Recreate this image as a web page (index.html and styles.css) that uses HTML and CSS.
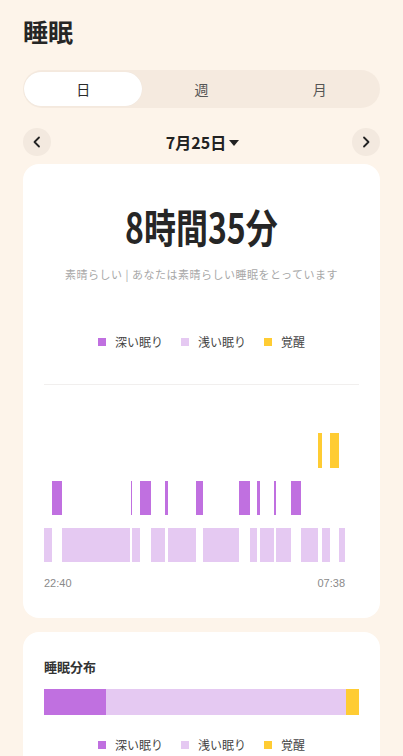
FILE: index.html
```html
<!DOCTYPE html>
<html lang="ja">
<head>
<meta charset="utf-8">
<title>睡眠</title>
<link rel="stylesheet" href="styles.css">
</head>
<body>
<div class="page">
  <h1 class="title">睡眠</h1>
  <div class="segment">
    <div class="seg-item active">日</div>
    <div class="seg-item">週</div>
    <div class="seg-item">月</div>
  </div>
  <div class="date-row">
    <button class="nav-btn" aria-label="前へ">
      <svg width="10" height="12" viewBox="0 0 10 12"><path d="M7 1.5 L2.5 6 L7 10.5" fill="none" stroke="#222" stroke-width="1.8" stroke-linecap="round" stroke-linejoin="round"/></svg>
    </button>
    <div class="date">7月25日<span class="caret"></span></div>
    <button class="nav-btn" aria-label="次へ">
      <svg width="10" height="12" viewBox="0 0 10 12"><path d="M3 1.5 L7.5 6 L3 10.5" fill="none" stroke="#222" stroke-width="1.8" stroke-linecap="round" stroke-linejoin="round"/></svg>
    </button>
  </div>

  <section class="card card-main">
    <div class="total"><span class="total-text">8時間35分</span></div>
    <p class="subtitle">素晴らしい | あなたは素晴らしい睡眠をとっています</p>
    <div class="legend">
      <span class="lg-item"><i class="sq deep"></i>深い眠り</span>
      <span class="lg-item"><i class="sq light"></i>浅い眠り</span>
      <span class="lg-item"><i class="sq awake"></i>覚醒</span>
    </div>
    <div class="divider"></div>
    <div class="chart">
      <div class="bar awake" style="left:274px;width:4px"></div>
      <div class="bar awake" style="left:286px;width:9px"></div>

      <div class="bar deep" style="left:8px;width:10px"></div>
      <div class="bar deep" style="left:86.8px;width:1.6px"></div>
      <div class="bar deep" style="left:96.3px;width:10.7px"></div>
      <div class="bar deep" style="left:121.3px;width:2.4px"></div>
      <div class="bar deep" style="left:152px;width:7px"></div>
      <div class="bar deep" style="left:195px;width:11px"></div>
      <div class="bar deep" style="left:213px;width:3px"></div>
      <div class="bar deep" style="left:230px;width:2px"></div>
      <div class="bar deep" style="left:247px;width:10px"></div>

      <div class="bar light" style="left:0;width:8px"></div>
      <div class="bar light" style="left:18.3px;width:68px"></div>
      <div class="bar light" style="left:88.4px;width:7.6px"></div>
      <div class="bar light" style="left:107.3px;width:13.7px"></div>
      <div class="bar light" style="left:124px;width:28px"></div>
      <div class="bar light" style="left:159.3px;width:35.7px"></div>
      <div class="bar light" style="left:206.3px;width:6.7px"></div>
      <div class="bar light" style="left:216.3px;width:13.7px"></div>
      <div class="bar light" style="left:232.3px;width:14.7px"></div>
      <div class="bar light" style="left:257.3px;width:16.7px"></div>
      <div class="bar light" style="left:278px;width:8px"></div>
      <div class="bar light" style="left:295px;width:6px"></div>
    </div>
    <div class="times">
      <span>22:40</span>
      <span>07:38</span>
    </div>
  </section>

  <section class="card card-dist">
    <h2 class="dist-title">睡眠分布</h2>
    <div class="dist-bar">
      <div class="seg deep" style="width:62px"></div>
      <div class="seg light" style="flex:1"></div>
      <div class="seg awake" style="width:13px"></div>
    </div>
    <div class="legend legend-dist">
      <span class="lg-item"><i class="sq deep"></i>深い眠り</span>
      <span class="lg-item"><i class="sq light"></i>浅い眠り</span>
      <span class="lg-item"><i class="sq awake"></i>覚醒</span>
    </div>
  </section>
</div>
</body>
</html>
```

FILE: styles.css
```css
* { box-sizing: border-box; }
html, body { margin: 0; padding: 0; }
body {
  background: #fdf4ea;
  font-family: "Noto Sans CJK JP", "Noto Sans", sans-serif;
  color: #222;
  overflow: hidden;
}
.page {
  padding: 0 23px;
}
.title {
  margin: 0;
  padding-top: 14px;
  font-size: 25px;
  line-height: 34px;
  font-weight: 700;
  color: #262626;
}
.segment {
  margin-top: 22px;
  height: 38px;
  background: #f5eadf;
  border-radius: 19px;
  display: flex;
  padding: 2px 1px;
}
.seg-item {
  flex: 1;
  display: flex;
  align-items: center;
  justify-content: center;
  font-size: 14px;
  color: #555;
  border-radius: 17px;
}
.seg-item.active {
  background: #fff;
  color: #2a2a2a;
  box-shadow: 0 0 1px rgba(0,0,0,0.06);
}
.date-row {
  margin-top: 20px;
  height: 28px;
  display: flex;
  align-items: center;
  justify-content: space-between;
}
.nav-btn {
  width: 28px;
  height: 28px;
  border-radius: 50%;
  border: none;
  padding: 0;
  background: #f3e9df;
  display: flex;
  align-items: center;
  justify-content: center;
}
.date {
  font-size: 16px;
  font-weight: 700;
  color: #222;
  display: flex;
  align-items: center;
  margin-left: 2px;
}
.caret {
  display: inline-block;
  width: 0;
  height: 0;
  border-left: 5px solid transparent;
  border-right: 5px solid transparent;
  border-top: 6px solid #222;
  margin-left: 3px;
  margin-top: 1px;
}
.card {
  background: #fff;
  border-radius: 16px;
  padding: 0 21px;
}
.card-main {
  margin-top: 8px;
  padding-bottom: 28px;
}
.total {
  margin-top: 0;
  padding-top: 40px;
  height: 84px;
  display: flex;
  justify-content: center;
}
.total-text {
  display: inline-block;
  font-size: 40px;
  line-height: 44px;
  font-weight: 700;
  color: #262626;
  transform: scaleX(0.8);
  white-space: nowrap;
}
.subtitle {
  margin: 18px 0 0;
  text-align: center;
  font-size: 11px;
  line-height: 16px;
  letter-spacing: 0.5px;
  color: #a8a8a8;
  white-space: nowrap;
}
.legend {
  margin-top: 52px;
  display: flex;
  justify-content: center;
  gap: 18px;
  font-size: 12px;
  line-height: 16px;
  color: #444;
}
.lg-item {
  display: flex;
  align-items: center;
}
.sq {
  display: inline-block;
  width: 8px;
  height: 8px;
  margin-right: 9px;
}
.sq.deep, .deep { background: #c070e0; }
.sq.light, .light { background: #e5c9f2; }
.sq.awake, .awake { background: #ffcc33; }
.divider {
  margin-top: 34px;
  height: 1px;
  background: #f1efee;
}
.chart {
  position: relative;
  margin-top: 48px;
  width: 301px;
  height: 129px;
}
.bar {
  position: absolute;
  height: 34.5px;
}
.bar.awake { top: 0; }
.bar.deep { top: 47.5px; }
.bar.light { top: 94.5px; }
.times {
  margin-top: 14px;
  width: 301px;
  display: flex;
  justify-content: space-between;
  font-family: "Liberation Sans", Arial, sans-serif;
  font-size: 11px;
  line-height: 14px;
  color: #8a8a8a;
}
.card-dist {
  margin-top: 14px;
  padding-top: 25px;
  padding-bottom: 30px;
}
.dist-title {
  margin: 0;
  font-size: 13px;
  line-height: 20px;
  font-weight: 700;
  color: #333;
}
.dist-bar {
  margin-top: 12px;
  height: 26px;
  display: flex;
}
.legend-dist {
  margin-top: 22px;
}
```
